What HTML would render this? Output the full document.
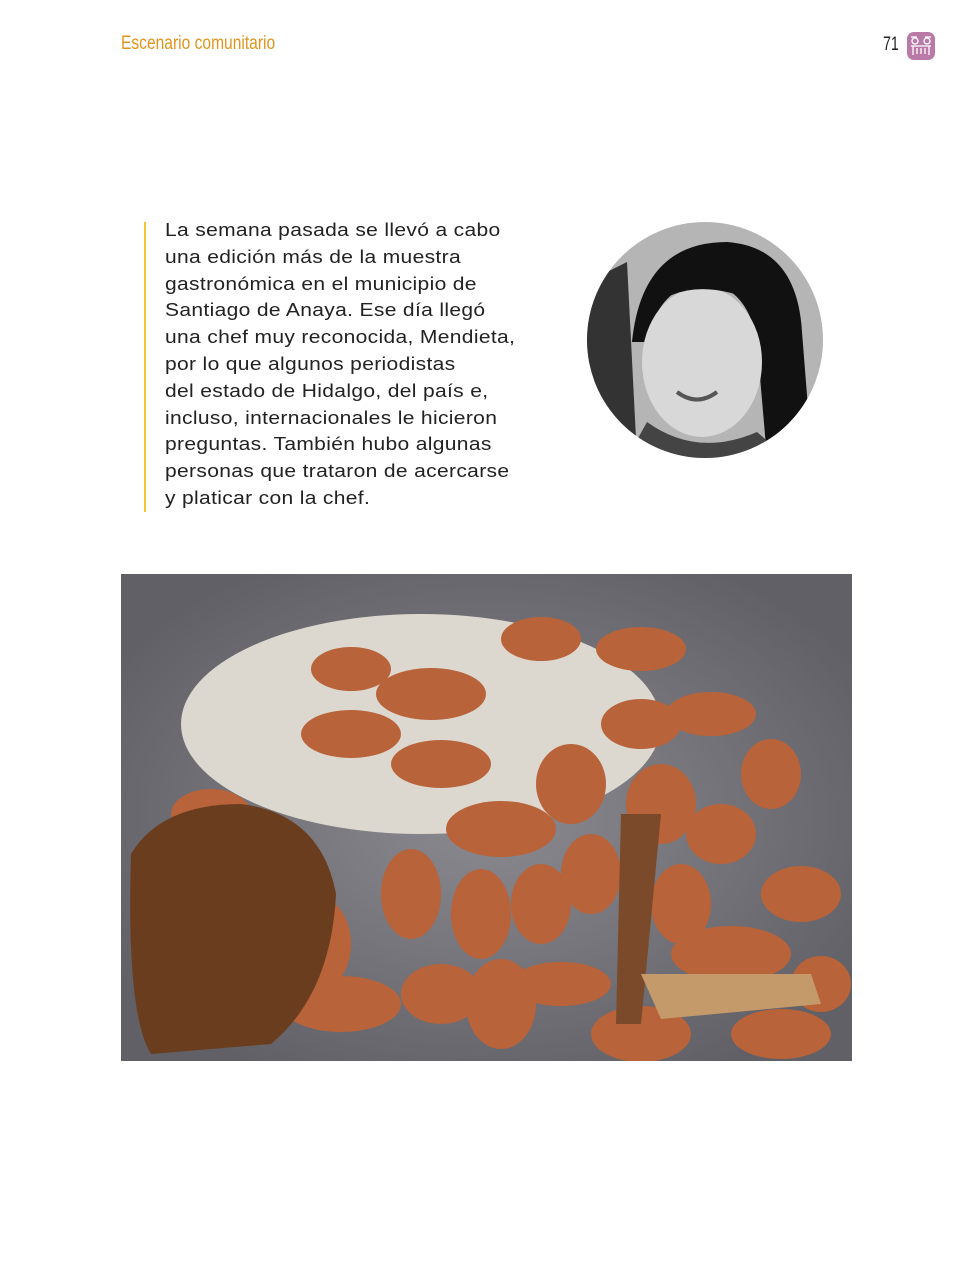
<!DOCTYPE html>
<html><head><meta charset="utf-8"><style>
body{margin:0;width:969px;height:1276px;background:#fff;position:relative;overflow:hidden;font-family:"Liberation Sans",sans-serif}
.hdr{position:absolute;left:121px;top:33px;color:#e0941c;font-size:19px;transform:scaleX(0.82);transform-origin:0 0;white-space:nowrap}
.pg{position:absolute;left:883px;top:34px;font-size:19px;color:#222;transform:scaleX(0.75);transform-origin:0 0}
.bar{position:absolute;left:144px;top:222px;width:2px;height:290px;background:#f2c52e}
.txt{position:absolute;left:165px;top:217px;font-size:18.6px;line-height:26.8px;color:#222;letter-spacing:0.3px;white-space:nowrap;transform:scaleX(1.13);transform-origin:0 0}
.circ{position:absolute;left:587px;top:222px;width:236px;height:236px;border-radius:50%;overflow:hidden}
.photo{position:absolute;left:121px;top:574px;width:731px;height:487px}
</style></head><body>
<div class="hdr">Escenario comunitario</div>
<div class="pg">71</div>
<svg style="position:absolute;left:907px;top:32px" width="28" height="28" viewBox="0 0 28 28"><rect x="0" y="0" width="28" height="28" rx="7" fill="#b97aa7"/><g fill="none" stroke="#fff" stroke-width="1.3"><circle cx="8" cy="9" r="3"/><circle cx="20" cy="9" r="3"/><path d="M4 14h20M6 14v9M10 16v6M14 16v6M18 16v6M22 14v9M4 5h6M18 5h6"/></g></svg>
<div class="bar"></div>
<div class="txt">La semana pasada se llevó a cabo<br>una edición más de la muestra<br>gastronómica en el municipio de<br>Santiago de Anaya. Ese día llegó<br>una chef muy reconocida, Mendieta,<br>por lo que algunos periodistas<br>del estado de Hidalgo, del país e,<br>incluso, internacionales le hicieron<br>preguntas. También hubo algunas<br>personas que trataron de acercarse<br>y platicar con la chef.</div>
<div class="circ"><svg width="236" height="236"><rect width="236" height="236" fill="#b5b5b5"/><path d="M0 60 L40 40 L50 236 L0 236Z" fill="#333"/><path d="M45 120 Q55 20 140 20 Q210 25 215 110 L225 236 L180 236 L170 120 Q160 60 110 60 Q70 70 60 120Z" fill="#111"/><ellipse cx="115" cy="140" rx="60" ry="75" fill="#d8d8d8"/><path d="M60 90 Q100 50 170 80 L170 60 Q120 30 60 70Z" fill="#111"/><path d="M90 170 Q110 185 130 170" stroke="#555" stroke-width="4" fill="none"/><path d="M60 200 Q110 236 170 210 L200 236 L40 236Z" fill="#444"/></svg></div>
<svg class="photo" viewBox="0 0 731 487"><defs><radialGradient id="g" cx="50%" cy="50%" r="60%"><stop offset="0" stop-color="#8a8a90"/><stop offset="1" stop-color="#606066"/></radialGradient></defs>
<rect width="731" height="487" fill="url(#g)"/>
<ellipse cx="300" cy="150" rx="240" ry="110" fill="#ddd8cf"/>
<g fill="#b8633a">
<ellipse cx="310" cy="120" rx="55" ry="26"/><ellipse cx="230" cy="95" rx="40" ry="22"/><ellipse cx="420" cy="65" rx="40" ry="22"/><ellipse cx="520" cy="75" rx="45" ry="22"/><ellipse cx="590" cy="140" rx="45" ry="22"/><ellipse cx="230" cy="160" rx="50" ry="24"/><ellipse cx="320" cy="190" rx="50" ry="24"/><ellipse cx="450" cy="210" rx="35" ry="40"/><ellipse cx="540" cy="230" rx="35" ry="40"/><ellipse cx="650" cy="200" rx="30" ry="35"/><ellipse cx="380" cy="255" rx="55" ry="28"/><ellipse cx="290" cy="320" rx="30" ry="45"/><ellipse cx="200" cy="370" rx="30" ry="45"/><ellipse cx="360" cy="340" rx="30" ry="45"/><ellipse cx="420" cy="330" rx="30" ry="40"/><ellipse cx="470" cy="300" rx="30" ry="40"/><ellipse cx="560" cy="330" rx="30" ry="40"/><ellipse cx="610" cy="380" rx="60" ry="28"/><ellipse cx="680" cy="320" rx="40" ry="28"/><ellipse cx="220" cy="430" rx="60" ry="28"/><ellipse cx="320" cy="420" rx="40" ry="30"/><ellipse cx="380" cy="430" rx="35" ry="45"/><ellipse cx="440" cy="410" rx="50" ry="22"/><ellipse cx="520" cy="460" rx="50" ry="28"/><ellipse cx="660" cy="460" rx="50" ry="25"/><ellipse cx="700" cy="410" rx="30" ry="28"/><ellipse cx="90" cy="240" rx="40" ry="25"/><ellipse cx="600" cy="260" rx="35" ry="30"/><ellipse cx="520" cy="150" rx="40" ry="25"/></g>
<path d="M10 280 Q40 230 120 230 Q200 240 215 320 Q210 420 150 470 L30 480 Q5 440 10 280Z" fill="#6a3d1e"/>
<path d="M500 240 L540 240 L520 450 L495 450Z" fill="#7a4a2a"/>
<path d="M520 400 L690 400 L700 430 L540 445Z" fill="#c49a6a"/>
</svg>
</body></html>
